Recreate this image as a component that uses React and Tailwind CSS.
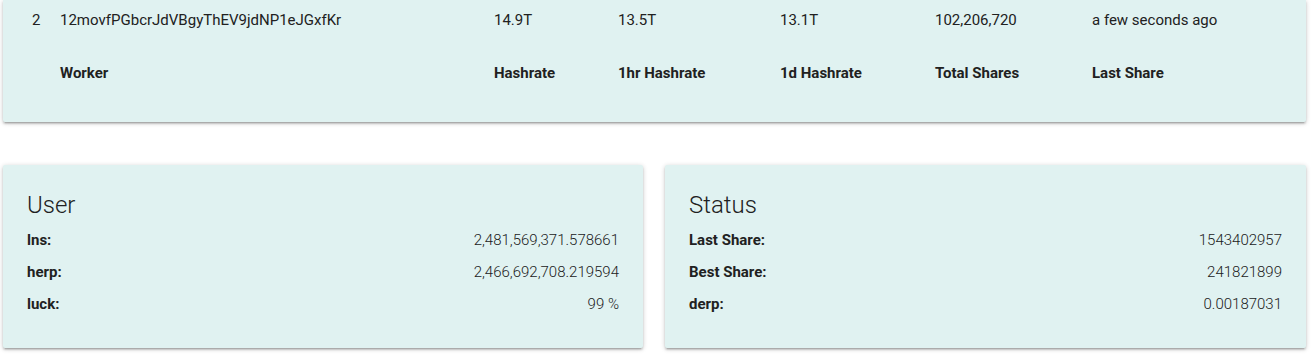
import React from "react";

const shadow =
  "shadow-[0_2px_2px_0_rgba(0,0,0,0.14),0_3px_1px_-2px_rgba(0,0,0,0.12),0_1px_5px_0_rgba(0,0,0,0.2)]";

function Row({ label, value }) {
  return (
    <div className="flex h-[32px] items-center justify-between">
      <span className="font-bold">{label}</span>
      <span className="font-light">{value}</span>
    </div>
  );
}

function InfoCard({ title, rows }) {
  return (
    <div className={`rounded-[2px] bg-[#e0f2f1] px-[24px] pt-[24px] pb-[28px] ${shadow}`}>
      <div className="h-[32px] text-[24px] font-light leading-[32px]">{title}</div>
      <div className="mt-[3px]">
        {rows.map((r) => (
          <Row key={r[0]} label={r[0]} value={r[1]} />
        ))}
      </div>
    </div>
  );
}

export default function App() {
  const cols =
    "grid grid-cols-[28px_434px_124px_162px_155px_157px_1fr] items-center pl-[29px]";
  return (
    <div
      className="min-h-[357px] bg-white text-[15px] text-[#212121]"
      style={{ fontFamily: "Roboto, 'Liberation Sans', sans-serif" }}
    >
      <div className="px-[3px] pr-[5px]">
        <div className={`rounded-b-[2px] bg-[#e0f2f1] pb-[29px] ${shadow}`}>
          <div className={`${cols} h-[40px]`}>
            <span>2</span>
            <span>12movfPGbcrJdVBgyThEV9jdNP1eJGxfKr</span>
            <span>14.9T</span>
            <span>13.5T</span>
            <span>13.1T</span>
            <span>102,206,720</span>
            <span>a few seconds ago</span>
          </div>
          <div className={`${cols} mt-[13px] h-[40px] font-bold`}>
            <span></span>
            <span>Worker</span>
            <span>Hashrate</span>
            <span>1hr Hashrate</span>
            <span>1d Hashrate</span>
            <span>Total Shares</span>
            <span>Last Share</span>
          </div>
        </div>

        <div className="mt-[43px] grid grid-cols-[640px_1fr] gap-[22px]">
          <InfoCard
            title="User"
            rows={[
              ["lns:", "2,481,569,371.578661"],
              ["herp:", "2,466,692,708.219594"],
              ["luck:", "99 %"],
            ]}
          />
          <InfoCard
            title="Status"
            rows={[
              ["Last Share:", "1543402957"],
              ["Best Share:", "241821899"],
              ["derp:", "0.00187031"],
            ]}
          />
        </div>
      </div>
    </div>
  );
}
